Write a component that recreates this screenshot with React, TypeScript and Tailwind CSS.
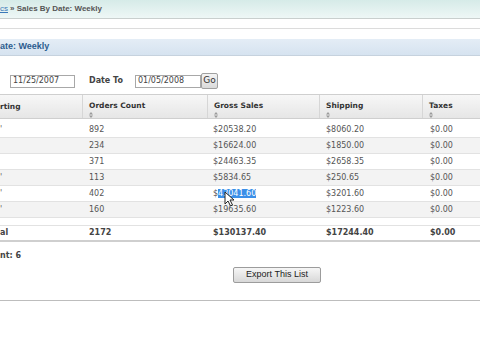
const rows = [
  { wk: "'", orders: "892", gross: "$20538.20", ship: "$8060.20", tax: "$0.00" },
  { wk: "", orders: "234", gross: "$16624.00", ship: "$1850.00", tax: "$0.00" },
  { wk: "", orders: "371", gross: "$24463.35", ship: "$2658.35", tax: "$0.00" },
  { wk: "'", orders: "113", gross: "$5834.65", ship: "$250.65", tax: "$0.00" },
  { wk: "'", orders: "402", gross: "$43041.60", ship: "$3201.60", tax: "$0.00" },
  { wk: "'", orders: "160", gross: "$19635.60", ship: "$1223.60", tax: "$0.00" },
];

const cols = "grid grid-cols-[83px_125px_112px_103px_1fr]";

function SortArrows() {
  return (
    <svg width="4" height="6" viewBox="0 0 4 6" className="mt-[2px]">
      <path d="M0 2.5 L2 0 L4 2.5 Z M0 3.5 L2 6 L4 3.5 Z" fill="#9a9a9a" />
    </svg>
  );
}

function Cursor() {
  return (
    <svg width="11" height="16" viewBox="0 0 11 16" className="absolute left-[224px] top-[191px]">
      <path d="M1 1 L1 13 L4 10 L6.5 15 L8.5 14 L6 9 L10 9 Z" fill="#fff" stroke="#222" strokeWidth="1" strokeLinejoin="round" />
    </svg>
  );
}

export default function App() {
  return (
    <div className="relative w-[480px] h-[360px] overflow-hidden bg-white text-[#555] font-['DejaVu_Sans',sans-serif] text-[8px]">
      {/* breadcrumb */}
      <div className="h-[19px] flex items-center bg-gradient-to-b from-[#d6ebe8] to-[#eef7f6] border-b border-[#c9cfce] font-['Liberation_Sans',sans-serif]">
        <span className="text-[#3b78b8] underline">cs</span>
        <span className="ml-[2px] font-bold text-[#555]">» Sales By Date: Weekly</span>
      </div>
      <div className="h-[10px] border-b border-[#dcdcdc]" />
      <div className="h-[10px]" />
      {/* title bar */}
      <div className="h-[17px] flex items-center bg-gradient-to-b from-[#e4edf6] to-[#d6e3f0] border-b border-[#c6d2de]">
        <span className="font-bold text-[9px] text-[#2c5d8f] font-['Liberation_Sans',sans-serif]">ate: Weekly</span>
      </div>

      {/* date filter */}
      <div className="mt-[17px] h-[16px] flex items-center">
        <div className="ml-[10px] w-[65px] h-[13px] border border-[#a8a8a8] bg-white flex items-center pl-[2px] text-[#444]">11/25/2007</div>
        <span className="ml-[14px] font-bold text-[#444]">Date To</span>
        <div className="ml-[12px] w-[66px] h-[13px] border border-[#a8a8a8] bg-white flex items-center pl-[2px] text-[#444]">01/05/2008</div>
        <div className="w-[17px] h-[16px] border border-[#a0a0a0] rounded-[2px] bg-gradient-to-b from-[#f4f4f4] to-[#dadada] flex items-center justify-center text-[9px] text-[#333]">Go</div>
      </div>

      {/* table */}
      <div className="mt-[5px]">
        <div className={`${cols} h-[25px] border-t border-b border-[#cfcfcf] bg-gradient-to-b from-[#f7f7f7] to-[#e6e6e6] font-bold text-[#333] text-[7.5px]`}>
          <div className="border-r border-[#d6d6d6] pt-[6px]">rting</div>
          {["Orders Count", "Gross Sales", "Shipping", "Taxes"].map((h) => (
            <div key={h} className={`${h === "Taxes" ? "" : "border-r border-[#d6d6d6]"} pl-[6px] pt-[6px] flex flex-col`}>
              <span className="leading-[9px]">{h}</span>
              <SortArrows />
            </div>
          ))}
        </div>
        <div className="pt-[3px]">
          {rows.map((r, i) => (
            <div key={r.orders} className={`${cols} h-[16px] items-center border-b border-[#e2e2e2] ${i % 2 ? "bg-[#f3f3f3]" : "bg-white"}`}>
              <div className="text-[#666]">{r.wk}</div>
              <div className="pl-[6px]">{r.orders}</div>
              <div className="pl-[5px]">
                {r.orders === "402" ? (
                  <span>
                    $<span className="bg-[#3b8fe8] text-white">43041.60</span>
                  </span>
                ) : (
                  r.gross
                )}
              </div>
              <div className="pl-[6px]">{r.ship}</div>
              <div className="pl-[7px]">{r.tax}</div>
            </div>
          ))}
        </div>
        <div className={`${cols} mt-[7px] h-[17px] items-center border-t border-b-2 border-t-[#e2e2e2] border-b-[#cfcfcf] font-bold text-[#444]`}>
          <div>al</div>
          <div className="pl-[6px]">2172</div>
          <div className="pl-[5px]">$130137.40</div>
          <div className="pl-[6px]">$17244.40</div>
          <div className="pl-[7px]">$0.00</div>
        </div>
      </div>

      <div className="mt-[8px] font-bold text-[#444]">nt: 6</div>

      <div className="mt-[5px] flex justify-center pl-[74px]">
        <div className="w-[88px] h-[16px] border border-[#9c9c9c] rounded-[2px] bg-gradient-to-b from-[#f6f6f6] to-[#d8d8d8] flex items-center justify-center font-['Liberation_Sans',sans-serif] text-[9px] text-[#222]">
          Export This List
        </div>
      </div>

      <div className="mt-[17px] border-b border-[#bdbdbd]" />

      <Cursor />
    </div>
  );
}
